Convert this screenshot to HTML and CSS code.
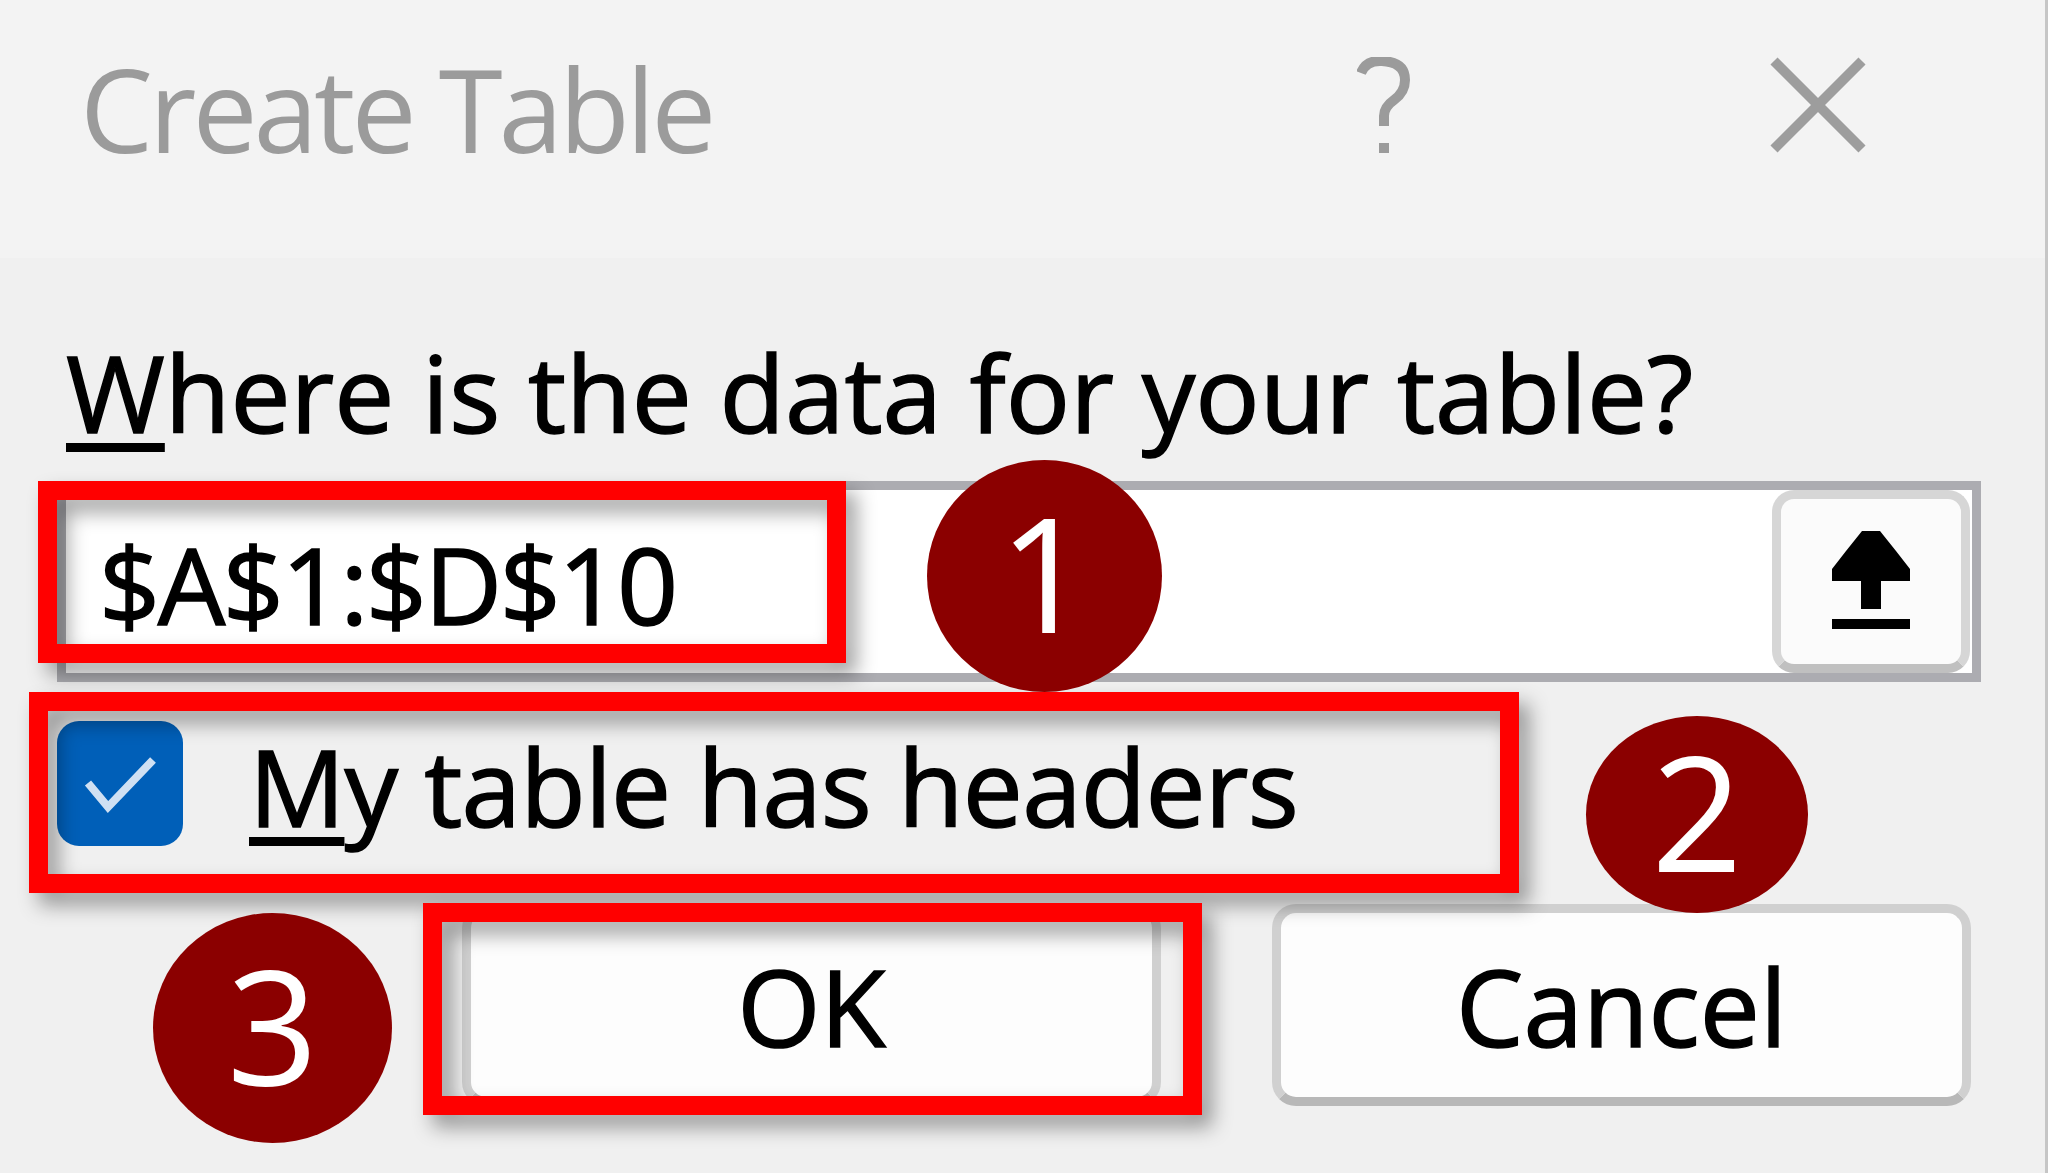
FILE: index.html
```html
<!DOCTYPE html>
<html lang="en">
<head>
    <meta charset="UTF-8">
    <title>Create Table</title>
    <link rel="stylesheet" href="styles.css">
</head>
<body>
    <div class="dialog">
        <div class="titlebar">
            <span class="title">Create Table</span>
            <svg class="help" width="56" height="96" viewBox="0 0 56 96">
                <path d="M4 16 Q9 3 25 4 Q48 5 48 23 Q48 35 37 43 Q27 50 27 59 L27 69" />
                <rect x="22" y="86" width="10" height="10" />
            </svg>
            <svg class="close" width="98" height="96" viewBox="0 0 98 96">
                <path d="M5 4 L93 92 M93 4 L5 92" />
            </svg>
        </div>

        <div class="content">
            <p class="prompt"><u>W</u>here is the data for your table?</p>

            <div class="range-field">
                <span class="range-text">$A$1:$D$10</span>
                <button class="collapse-btn">
                    <svg width="78" height="98" viewBox="0 0 78 98">
                        <polygon points="30,0 48,0 64,20 78,38 78,50 49,50 49,78 29,78 29,50 0,50 0,38 14,20" />
                        <rect x="0" y="88" width="78" height="10" />
                    </svg>
                </button>
            </div>

            <label class="check-row">
                <span class="checkbox">
                    <svg width="126" height="125" viewBox="0 0 126 125">
                        <path d="M31 62 L51 86 L96 39" />
                    </svg>
                </span>
                <span class="check-label"><u>M</u>y table has headers</span>
            </label>

            <div class="buttons">
                <button class="btn">OK</button>
                <button class="btn">Cancel</button>
            </div>
        </div>

        <!-- annotation marks -->
        <div class="mark box-range"></div>
        <div class="mark box-headers"></div>
        <div class="mark box-ok"></div>
        <div class="step step-1">1</div>
        <div class="step step-2">2</div>
        <div class="step step-3">3</div>
    </div>
</body>
</html>
```

FILE: styles.css
```css
body {margin: 0; background: #f0f0f0; font-family: "Open Sans", "Noto Sans", sans-serif; color: #000}
.dialog {position: relative; width: 2048px; height: 1173px; box-sizing: border-box;
         border-right: 3px solid #c6c6c6; background: #f0f0f0; overflow: hidden}

.titlebar {display: flex; align-items: flex-start; height: 258px; background: #f3f3f3; padding-right: 178px; box-sizing: border-box}
.title {margin: 50px 0 0 80px; font-size: 116px; line-height: 116px; letter-spacing: -4px; color: #9b9b9b}
.help {margin: 57px 0 0 auto; fill: #9b9b9b}
.help path {fill: none; stroke: #9b9b9b; stroke-width: 10}
.close {margin: 57px 0 0 356px}
.close path {fill: none; stroke: #9d9d9d; stroke-width: 10}

.content {padding: 0 64px 0 57px; font-size: 107px; line-height: 107px; -webkit-text-stroke: 1.5px #000}
.prompt {margin: 80px 0 36px 9px}
.prompt u, .check-label u {text-decoration-thickness: 9px; text-underline-offset: 10px}

.range-field {display: flex; height: 201px; box-sizing: border-box; border: 9px solid #acacb1; background: #fff}
.range-text {flex: 1; padding: 40px 0 0 33px; letter-spacing: -2.5px}
.collapse-btn {width: 198px; height: 100%; margin-right: 2px; padding: 0; display: flex; align-items: center; justify-content: center;
               background: #fbfbfb; border: 9px solid #d6d6d6; border-bottom-color: #c0c0c0; border-radius: 22px}
.collapse-btn svg {fill: #000; margin-top: -4px}

.check-row {display: flex; align-items: flex-start; height: 126px; margin-top: 39px}
.checkbox {width: 126px; height: 125px; background: #005fb8; border-radius: 22px}
.checkbox path {fill: none; stroke: #cfe0f3; stroke-width: 8}
.check-label {margin: 11px 0 0 66px; letter-spacing: -0.8px}

.buttons {display: flex; gap: 111px; margin-top: 57px; padding-left: 405px}
.btn {width: 699px; height: 202px; padding: 0; font: inherit; color: #000; background: #fdfdfd;
      border: 9px solid #d0d0d0; border-bottom-color: #b8b8b8; border-radius: 24px}

.mark {position: absolute; box-sizing: border-box; border: 19px solid #ff0000; filter: drop-shadow(10px 12px 10px rgba(0,0,0,0.38))}
.box-range {left: 38px; top: 481px; width: 808px; height: 182px}
.box-headers {left: 29px; top: 692px; width: 1490px; height: 201px}
.box-ok {left: 423px; top: 903px; width: 779px; height: 212px}

.step {position: absolute; display: flex; align-items: center; justify-content: center; padding-bottom: 10px; box-sizing: border-box;
       background: #8b0000; color: #fff; border-radius: 50%; font-size: 160px; line-height: 160px}
.step-1 {left: 927px; top: 460px; width: 235px; height: 232px}
.step-2 {left: 1586px; top: 716px; width: 222px; height: 197px}
.step-3 {left: 153px; top: 913px; width: 239px; height: 230px}
```
